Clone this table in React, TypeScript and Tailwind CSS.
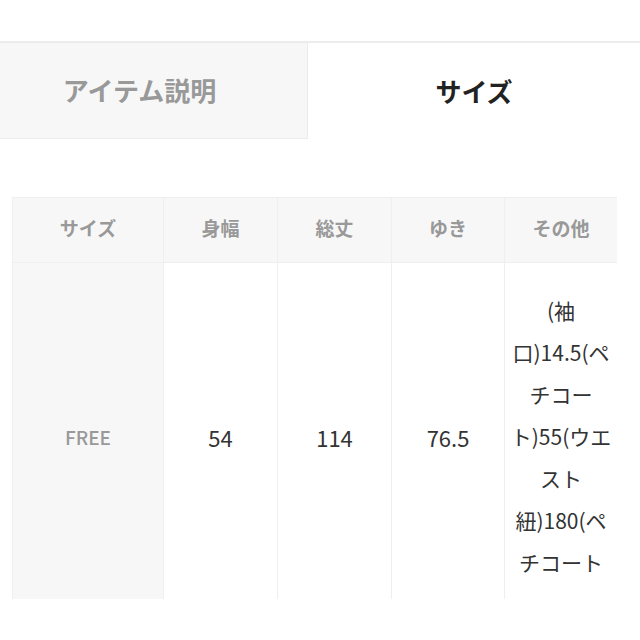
const font = { fontFamily: '"Noto Sans CJK JP", "Noto Sans", sans-serif' };

const headers = ["サイズ", "身幅", "総丈", "ゆき", "その他"];
const widths = ["w-[151px]", "w-[114px]", "w-[114px]", "w-[113px]", "w-[113px]"];

export default function App() {
  return (
    <div className="h-[640px] w-[640px] overflow-hidden bg-white" style={font}>
      <div className="h-[41px]" />
      <div className="flex border-t-2 border-[#ececec]">
        <div className="flex h-[96px] w-[308px] items-center justify-center border-r border-b border-[#ebebeb] bg-[#f7f7f7] pr-[28px] pb-[2px] text-[26px] font-bold text-[#999999]">
          アイテム説明
        </div>
        <div className="flex h-[96px] flex-1 items-center justify-center pb-[2px] text-[26px] font-bold text-[#222222]">
          サイズ
        </div>
      </div>
      <div className="h-[58px]" />
      <div className="ml-[12px] h-[402px] w-[605px] overflow-hidden">
        <table className="w-[605px] table-fixed border-collapse">
          <thead>
            <tr className="h-[65px] bg-[#f7f7f7]">
              {headers.map((h, i) => (
                <th key={h} className={`${widths[i]} border border-[#efefef] pb-[3px] text-[19px] font-bold text-[#999999]`}>
                  {h}
                </th>
              ))}
            </tr>
          </thead>
          <tbody>
            <tr>
              <td className="border border-[#efefef] bg-[#f7f7f7] text-center text-[19px] font-medium text-[#999999]">FREE</td>
              <td className="border border-[#efefef] text-center text-[22px] text-[#333333]">54</td>
              <td className="border border-[#efefef] text-center text-[22px] text-[#333333]">114</td>
              <td className="border border-[#efefef] text-center text-[22px] text-[#333333]">76.5</td>
              <td className="border border-[#efefef] px-[5px] pt-[26px] pb-[28px] text-center text-[21px] leading-[42px] text-[#333333]">
                (袖口)14.5(ペチコート)55(ウエスト紐)180(ペチコート
              </td>
            </tr>
          </tbody>
        </table>
      </div>
    </div>
  );
}
